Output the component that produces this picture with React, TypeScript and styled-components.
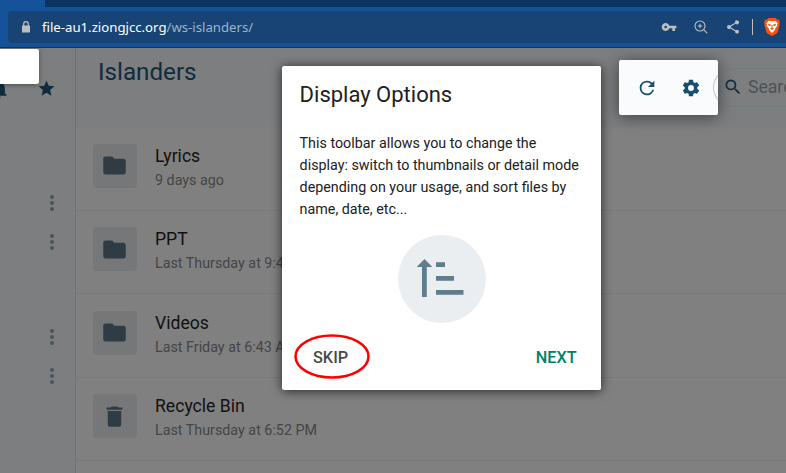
import React from "react";
import styled, { createGlobalStyle } from "styled-components";

const GlobalStyle = createGlobalStyle`
  *, *::before, *::after { box-sizing: border-box; }
  body { margin: 0; overflow: hidden; background: #808080; }
`;

const Window = styled.div`
  position: relative;
  display: flex;
  flex-direction: column;
  width: 786px;
  height: 473px;
  overflow: hidden;
  font-family: Roboto, sans-serif;
`;

const TabStrip = styled.div`
  height: 7px;
  flex: none;
  padding-left: 45px;
  background: #14539a;
  &::after { content: ""; display: block; height: 100%; background: #0b3561; }
`;

const AddressBar = styled.div`
  height: 41px;
  flex: none;
  padding: 4px 0 4px 8px;
  background: #14539a;
  border-bottom: 1px solid #0d3769;
`;

const AddressField = styled.div`
  height: 32px;
  display: flex;
  align-items: center;
  padding: 0 6px 0 13px;
  border-radius: 4px 0 0 4px;
  background: #184475;
  color: #bcbfc2;
  svg { display: block; flex: none; }
`;

const Url = styled.div`
  flex: 1;
  margin-left: 11px;
  font: 13.2px/20px "Noto Sans", sans-serif;
  color: #9fb3c9;
  white-space: nowrap;
`;

const Host = styled.span`
  color: #fff;
`;

const AddressActions = styled.div`
  display: flex;
  align-items: center;
  gap: 16px;
`;

const Separator = styled.i`
  width: 1px;
  height: 16px;
  margin: 0 -5px 0 -5px;
  background: #bcbfc2;
`;

const Workspace = styled.div`
  flex: 1;
  min-height: 0;
  display: flex;
`;

const Sidebar = styled.aside`
  width: 76px;
  flex: none;
  padding-top: 31px;
  background: #7c7e80;
  border-right: 1px solid #6f7172;
`;

const SidebarTools = styled.div`
  display: flex;
  gap: 28px;
  margin-left: -11px;
  color: #102c3b;
  svg { display: block; }
`;

const MenuGroup = styled.div<{ $top: number }>`
  display: flex;
  flex-direction: column;
  gap: 21px;
  margin: ${(p) => p.$top}px 0 0 48px;
  svg { display: block; }
`;

const Main = styled.main`
  flex: 1;
  min-width: 0;
  background: #808080;
`;

const Header = styled.header`
  height: 79px;
  display: flex;
  justify-content: space-between;
  padding-left: 22px;
  background: #7c7e80;
`;

const FolderTitle = styled.h1`
  margin: 8px 0 0;
  font-size: 24.2px;
  line-height: 32px;
  font-weight: 400;
  color: #102c3b;
`;

const Search = styled.div`
  position: relative;
  z-index: 2;
  width: 73px;
  height: 39px;
  margin-top: 20px;
  flex: none;
  display: flex;
  align-items: center;
  padding-left: 9px;
  gap: 5px;
  border: 1px solid rgba(84, 122, 134, 0.38);
  border-right: 0;
  border-radius: 20px 0 0 20px;
  color: #102c3b;
  overflow: hidden;
  svg { flex: none; margin-top: -2px; }
`;

const Placeholder = styled.span`
  font-size: 17.6px;
  line-height: 22px;
  margin-top: -1px;
  color: #4c5356;
  white-space: nowrap;
`;

const FileRow = styled.div`
  height: 83.4px;
  display: flex;
  align-items: center;
  padding: 0 0 5.4px 17px;
  border-bottom: 1px solid #797979;
  &:first-of-type { height: 83.8px; }
`;

const Tile = styled.div`
  width: 44px;
  height: 44px;
  flex: none;
  display: grid;
  place-items: center;
  border-radius: 4px;
  background: #757779;
  color: #2f3c44;
  svg { display: block; margin-right: 1px; }
`;

const FileText = styled.div`
  margin: 3px 0 0 18px;
  white-space: nowrap;
`;

const FileName = styled.div`
  font-size: 17.6px;
  line-height: 24px;
  color: #101010;
`;

const FileDate = styled.div`
  margin-top: 1px;
  font-size: 14.3px;
  line-height: 22px;
  color: #454545;
`;

const BlankSpotlight = styled.div`
  position: absolute;
  left: -10px;
  top: 49px;
  width: 49px;
  height: 35px;
  border-radius: 2px;
  background: #fff;
  box-shadow: 0 1px 5px rgba(0, 0, 0, 0.4);
`;

const ToolbarSpotlight = styled.div`
  position: absolute;
  left: 619px;
  top: 60px;
  width: 99px;
  height: 55px;
  display: flex;
  align-items: center;
  gap: 23px;
  padding-left: 17px;
  border-radius: 2px;
  background: #f9fbfd;
  color: #174f6f;
  box-shadow: 0 2px 16px rgba(0, 0, 0, 0.5);
`;

const Dialog = styled.section`
  position: absolute;
  left: 282px;
  top: 66px;
  width: 319px;
  height: 324px;
  display: flex;
  flex-direction: column;
  padding: 13px 17.6px 16px;
  border-radius: 2px;
  background: #fff;
  color: #212121;
  box-shadow: 0 1px 11px rgba(0, 0, 0, 0.7);
`;

const DialogTitle = styled.h2`
  margin: 0;
  font-size: 22px;
  line-height: 32px;
  font-weight: 400;
`;

const DialogText = styled.p`
  margin: 21px -4px 0 0;
  font-size: 14.3px;
  line-height: 22px;
`;

const SortBadge = styled.div`
  width: 88px;
  height: 88px;
  margin: 15px 0 0 98.4px;
  border-radius: 50%;
  background: #eaeef1;
  svg { display: block; }
`;

const DialogActions = styled.div`
  display: flex;
  justify-content: space-between;
  margin-top: auto;
  padding: 0 6.8px 0 13.4px;
`;

const DialogButton = styled.button<{ $primary?: boolean }>`
  position: relative;
  height: 32px;
  padding: 0;
  border: 0;
  background: none;
  font: 500 16.3px/32px Roboto, sans-serif;
  color: ${(p) => (p.$primary ? "#00806a" : "#4a4a4a")};
`;

const Ring = styled.svg`
  position: absolute;
  left: -19px;
  top: -8px;
  pointer-events: none;
`;

type GlyphProps = { d: string; size?: number };

const Glyph = ({ d, size = 24 }: GlyphProps) => (
  <svg width={size} height={size} viewBox="0 0 24 24" fill="currentColor">
    <path d={d} />
  </svg>
);

const paths = {
  bell: "M21 19v1H3v-1l2-2v-6c0-3.100 2-5.800 5-6.700V4a2 2 0 0 1 4 0v.3c3 .9 5 3.600 5 6.700v6l2 2m-7 2a2 2 0 0 1-4 0",
  star: "M12 17.270 18.180 21l-1.640-7.030L22 9.240l-7.190-.610L12 2 9.190 8.630 2 9.240l5.460 4.730L5.820 21z",
  folder: "M10 4H4c-1.110 0-2 .89-2 2v12a2 2 0 0 0 2 2h16a2 2 0 0 0 2-2V8c0-1.110-.9-2-2-2h-8l-2-2z",
  trash: "M19 4h-3.500l-1-1h-5l-1 1H5v2h14M6 19a2 2 0 0 0 2 2h8a2 2 0 0 0 2-2V7H6v12z",
  refresh: "M17.650 6.350A7.950 7.950 0 0 0 12 4a8 8 0 1 0 7.730 10h-2.080A6 6 0 1 1 12 6c1.660 0 3.140.69 4.220 1.780L13 11h7V4l-2.350 2.350z",
  gear: "M12 15.500A3.500 3.500 0 0 1 8.500 12 3.500 3.500 0 0 1 12 8.500a3.500 3.500 0 0 1 3.500 3.500 3.500 3.500 0 0 1-3.500 3.500m7.430-2.530c.04-.32.07-.64.07-.97s-.03-.66-.07-1l2.110-1.630c.19-.15.24-.42.12-.64l-2-3.460c-.12-.22-.39-.31-.61-.22l-2.490 1c-.52-.39-1.060-.73-1.690-.98l-.37-2.650A.506.506 0 0 0 14 2h-4c-.25 0-.46.18-.5.42l-.37 2.650c-.63.25-1.170.59-1.690.98l-2.490-1c-.22-.09-.49 0-.61.22l-2 3.460c-.13.22-.07.49.12.64L4.570 11c-.04.34-.07.67-.07 1s.03.65.07.97l-2.110 1.660c-.19.15-.25.42-.12.64l2 3.460c.12.22.39.3.61.22l2.490-1.010c.52.4 1.060.74 1.690.99l.37 2.650c.04.24.25.42.5.42h4c.25 0 .46-.18.5-.42l.37-2.650c.63-.26 1.170-.59 1.690-.99l2.490 1.010c.22.08.49 0 .61-.22l2-3.460c.12-.22.07-.49-.12-.64l-2.110-1.660z",
  search: "M9.500 3A6.500 6.500 0 0 1 16 9.500c0 1.610-.59 3.090-1.560 4.230l.27.27h.79l5 5-1.500 1.500-5-5v-.79l-.27-.27A6.516 6.516 0 0 1 9.500 16a6.500 6.500 0 0 1 0-13m0 2C7 5 5 7 5 9.500S7 14 9.500 14 14 12 14 9.500 12 5 9.500 5z",
  key: "M12.650 10A6 6 0 1 0 12.650 14H17v4h4v-4h2v-4H12.650zM7 14a2 2 0 1 1 0-4 2 2 0 0 1 0 4z",
  share: "M18 16.080c-.76 0-1.440.3-1.960.77L8.910 12.700a3.300 3.300 0 0 0 0-1.400l7.050-4.110A3 3 0 1 0 15 5c0 .24.04.47.09.7L8.040 9.810a3 3 0 1 0 0 4.380l7.120 4.160A2.920 2.920 0 1 0 18 16.080z",
};

const LockIcon = () => (
  <svg width="10" height="12" viewBox="0 0 10 12">
    <path d="M2.700 5V3a2.300 2.300 0 0 1 4.600 0v2" fill="none" stroke="#bcbfc2" strokeWidth="1.200" />
    <rect x="1" y="4.500" width="8" height="7" rx=".6" fill="#bcbfc2" />
  </svg>
);

const ZoomIcon = () => (
  <svg width="16" height="16" viewBox="0 0 16 16" fill="none" stroke="currentColor" strokeWidth="1.100">
    <circle cx="7" cy="7" r="5" />
    <path d="m10.700 10.700 3.600 3.600M7 4.700v4.600M4.700 7h4.600" />
  </svg>
);

const ShieldIcon = () => (
  <svg width="16" height="18" viewBox="0 0 16 18">
    <path d="M4.500 0h7l1.400 1.500 1.600.1L16 4l-.6 2 .2.900-2 7.300-1.300 1.600L8 18l-4.300-2.200-1.300-1.600-2-7.300.2-.9L0 4l1.500-2.400 1.600-.1z" fill="#fb5007" />
    <path d="M4.600 2.700 8 3.300l3.400-.6 2.300 2.700-.6 1.300.2 1-2.300 3 .2 1L8 15l-3.200-3.300.2-1-2.300-3 .2-1-.6-1.300z" fill="#fff" />
    <path d="m4.200 5.800 2.700.8-.7 1.600-2-.9zm7.600 0-2.700.8.7 1.600 2-.9zM7.300 7h1.400l-.3 2.700 1.500.8L8 12l-1.900-1.500 1.500-.8z" fill="#fb5007" />
  </svg>
);

const DotsIcon = () => (
  <svg width="8" height="18" viewBox="0 0 8 18" fill="#47565e">
    <circle cx="4" cy="3" r="2" />
    <circle cx="4" cy="9" r="2" />
    <circle cx="4" cy="15" r="2" />
  </svg>
);

const SortIcon = () => (
  <svg width="88" height="88" viewBox="0 0 88 88" fill="#607d8b">
    <path d="M26.500 24 34.300 32h-5.500v30h-4.800V32h-5.300zM38 27.300h9v4.800h-9zM38 41h18v4.800H38zM38 55h27.500v4.800H38z" />
  </svg>
);

const files = [
  { name: "Lyrics", date: "9 days ago", icon: paths.folder },
  { name: "PPT", date: "Last Thursday at 9:44 PM", icon: paths.folder },
  { name: "Videos", date: "Last Friday at 6:43 AM", icon: paths.folder },
  { name: "Recycle Bin", date: "Last Thursday at 6:52 PM", icon: paths.trash },
];

export default function App() {
  return (
    <Window>
      <GlobalStyle />
      <TabStrip />
      <AddressBar>
        <AddressField>
          <LockIcon />
          <Url><Host>file-au1.ziongjcc.org</Host>/ws-islanders/</Url>
          <AddressActions>
            <Glyph d={paths.key} size={16} />
            <ZoomIcon />
            <Glyph d={paths.share} size={16} />
            <Separator />
            <ShieldIcon />
          </AddressActions>
        </AddressField>
      </AddressBar>
      <Workspace>
        <Sidebar>
          <SidebarTools>
            <Glyph d={paths.bell} size={20} />
            <Glyph d={paths.star} size={19} />
          </SidebarTools>
          <MenuGroup $top={95}><DotsIcon /><DotsIcon /></MenuGroup>
          <MenuGroup $top={77}><DotsIcon /><DotsIcon /></MenuGroup>
        </Sidebar>
        <Main>
          <Header>
            <FolderTitle>Islanders</FolderTitle>
            <Search><Glyph d={paths.search} size={20} /><Placeholder>Search...</Placeholder></Search>
          </Header>
          {files.map((file) => (
            <FileRow key={file.name}>
              <Tile><Glyph d={file.icon} size={27} /></Tile>
              <FileText>
                <FileName>{file.name}</FileName>
                <FileDate>{file.date}</FileDate>
              </FileText>
            </FileRow>
          ))}
        </Main>
      </Workspace>
      <BlankSpotlight />
      <ToolbarSpotlight>
        <Glyph d={paths.refresh} size={22} />
        <Glyph d={paths.gear} size={20} />
      </ToolbarSpotlight>
      <Dialog>
        <DialogTitle>Display Options</DialogTitle>
        <DialogText>
          This toolbar allows you to change the<br />
          display: switch to thumbnails or detail mode<br />
          depending on your usage, and sort files by<br />
          name, date, etc...
        </DialogText>
        <SortBadge><SortIcon /></SortBadge>
        <DialogActions>
          <DialogButton>
            SKIP
            <Ring width="76" height="46" viewBox="0 0 76 46" fill="none">
              <ellipse cx="38" cy="22.500" rx="36.500" ry="21" stroke="#f00" strokeWidth="2.500" />
            </Ring>
          </DialogButton>
          <DialogButton $primary>NEXT</DialogButton>
        </DialogActions>
      </Dialog>
    </Window>
  );
}
